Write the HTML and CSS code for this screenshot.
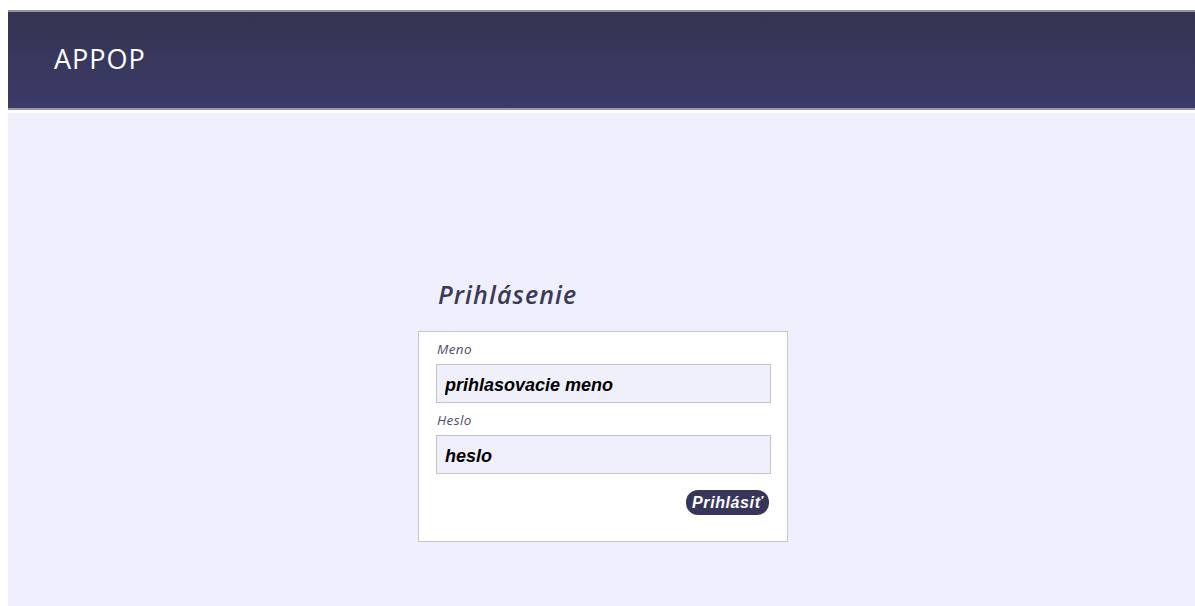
FILE: index.html
```html
<!DOCTYPE html>
<html lang="sk">
<head>
<meta charset="utf-8">
<title>APPOP – Prihlásenie</title>
<link rel="stylesheet" href="styles.css">
</head>
<body>
<header class="topbar">
  <div class="brand">APPOP</div>
</header>
<main class="stage">
  <section class="login">
    <h1 class="login-title">Prihlásenie</h1>
    <form class="login-box" action="#">
      <label class="field-label" for="user">Meno</label>
      <input class="field-input" id="user" type="text" value="prihlasovacie meno">
      <label class="field-label field-label--next" for="pass">Heslo</label>
      <input class="field-input" id="pass" type="text" value="heslo">
      <div class="actions">
        <button class="btn-submit" type="button">Prihlásiť</button>
      </div>
    </form>
  </section>
</main>
</body>
</html>
```
FILE: styles.css
```css
html, body {
  margin: 0;
  background: #ffffff;
}

body {
  padding: 10px 0 0 8px;
  font-family: "Open Sans", "DejaVu Sans", sans-serif;
}

/* top bar */
.topbar {
  height: 96px;
  border-top: 2px solid #8d93a1;
  border-bottom: 2px solid #9997b0;
  background: linear-gradient(#353451, #3b3a69);
  padding-left: 46px;
  display: flex;
  align-items: flex-start;
}

.brand {
  margin-top: 30px;
  color: #ffffff;
  font-family: "Open Sans", sans-serif;
  font-size: 27px;
  line-height: 34px;
  letter-spacing: 1px;
}

/* content area */
.stage {
  margin-top: 3px;
  height: 493px;
  background: #f0effe;
  box-sizing: border-box;
  padding: 166px 0 0 3px;
  display: flex;
  justify-content: center;
}

.login {
  width: 370px;
}

.login-title {
  margin: 0 0 22px;
  padding-left: 20px;
  font-family: "Open Sans", sans-serif;
  font-style: italic;
  font-weight: 600;
  font-size: 25px;
  line-height: 30px;
  letter-spacing: 1.1px;
  color: #3a3958;
}

.login-box {
  margin: 0;
  background: #ffffff;
  border: 1px solid #c6c6ca;
  padding: 8px 16px 26px 17px;
  display: flex;
  flex-direction: column;
}

.field-label {
  display: block;
  margin: 0 0 6px 1px;
  font-style: italic;
  font-size: 13.5px;
  line-height: 18px;
  letter-spacing: 0.4px;
  color: #4d4c6b;
}

.field-label--next {
  margin-top: 8px;
}

.field-input {
  box-sizing: border-box;
  width: 335px;
  height: 39px;
  margin: 0;
  padding: 3px 7px 0 8px;
  border: 1px solid #c3c3c8;
  background: #f0effc;
  font-family: "Liberation Sans", Arial, sans-serif;
  font-weight: bold;
  font-style: italic;
  font-size: 18px;
  color: #000000;
  outline: none;
}

.actions {
  display: flex;
  justify-content: flex-end;
  margin-top: 16px;
  padding-right: 2px;
}

.btn-submit {
  width: 83px;
  height: 25px;
  padding: 0;
  border: none;
  border-radius: 12px;
  background: #37365a;
  color: #ffffff;
  font-family: "Liberation Sans", Arial, sans-serif;
  font-weight: bold;
  font-style: italic;
  font-size: 16px;
  letter-spacing: 0.6px;
  cursor: pointer;
}
```
